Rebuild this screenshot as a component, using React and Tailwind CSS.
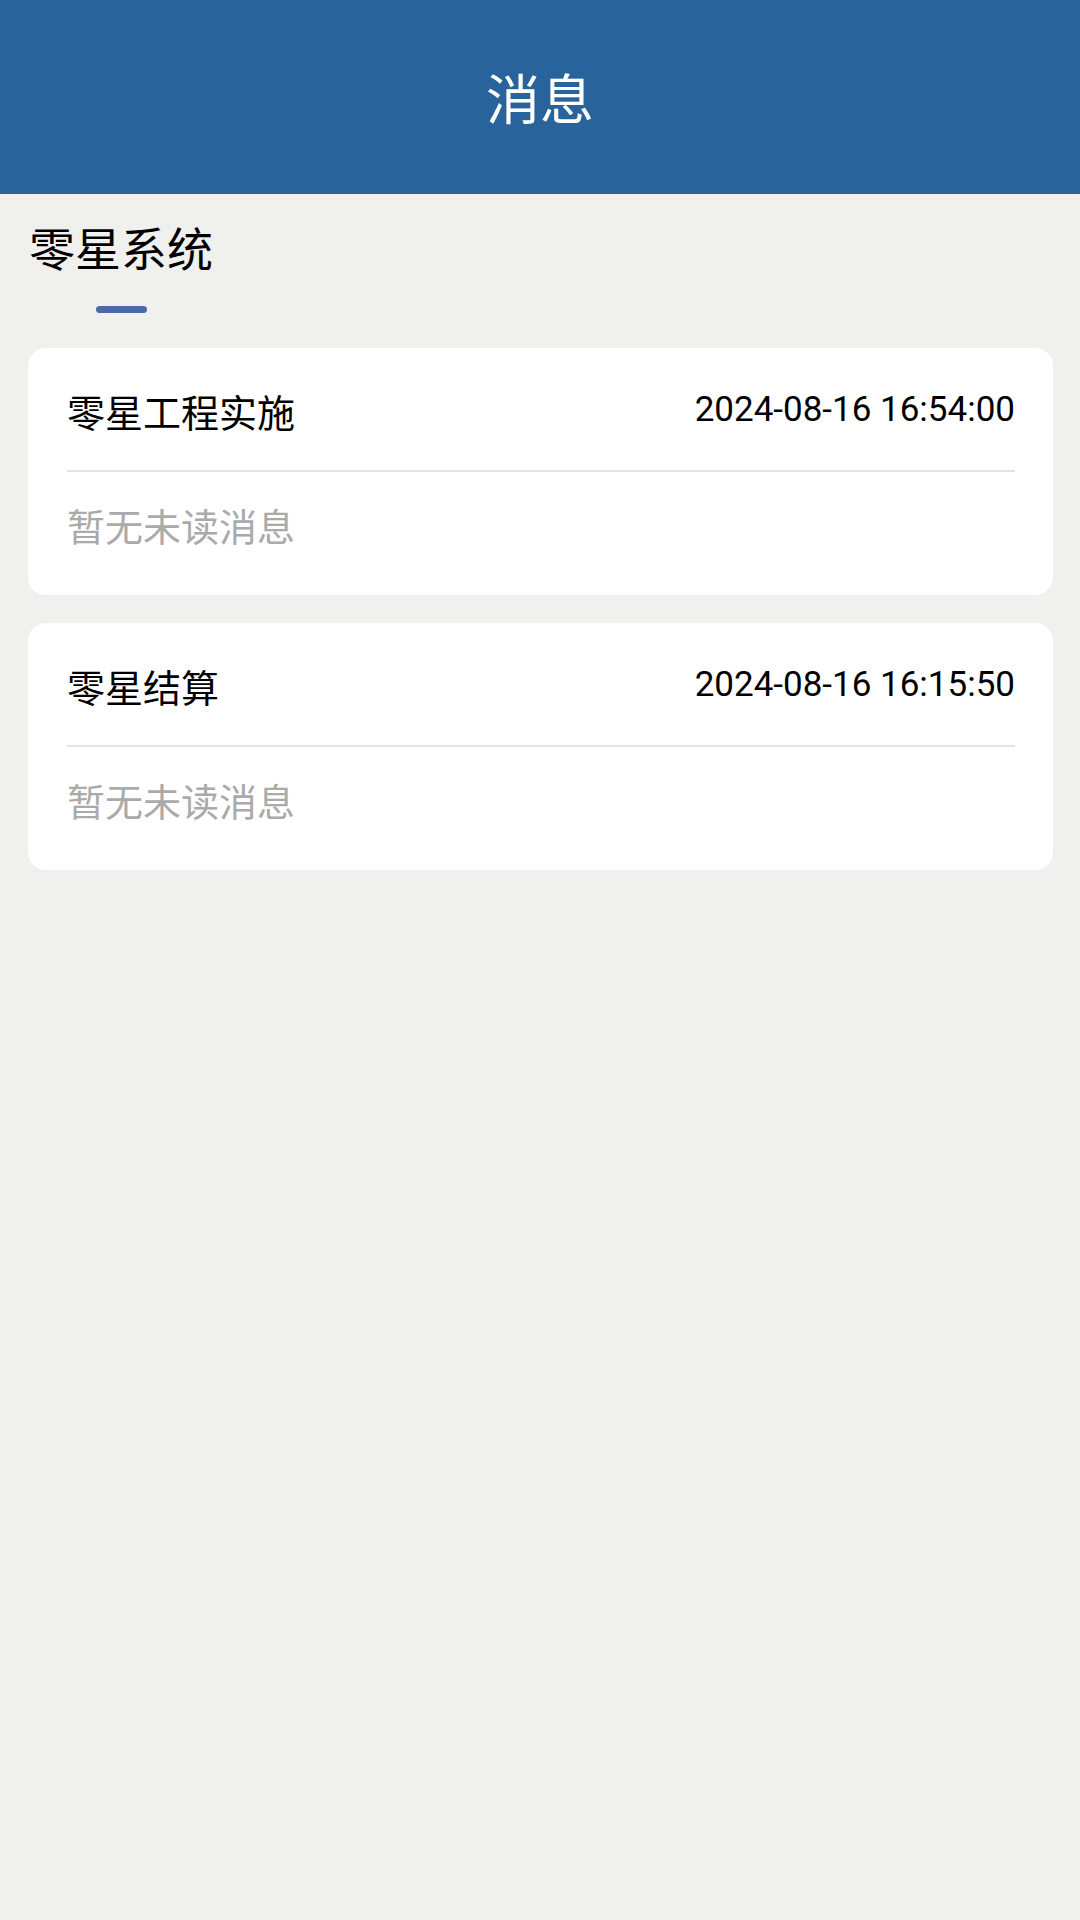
import React from 'react';

const messages = [
  { title: '零星工程实施', time: '2024-08-16 16:54:00', content: '暂无未读消息' },
  { title: '零星结算', time: '2024-08-16 16:15:50', content: '暂无未读消息' },
];

const cjk = "font-['Noto_Sans_CJK_SC',sans-serif]";

const MessageCard = ({ item }) => (
  <div className="bg-white rounded-[18px] pl-[39px] pr-[38px]">
    {/* title row */}
    <div className="h-[122px] pt-[44px] flex items-start justify-between">
      <span className={`${cjk} text-[38px] leading-none text-black`}>{item.title}</span>
      <span className="font-['Roboto',sans-serif] text-[35px] leading-none text-black">{item.time}</span>
    </div>
    <div className="h-[2px] bg-[#e3e3e3]"></div>
    <div className="h-[123px] pt-[34px]">
      <span className={`${cjk} text-[38px] leading-none text-[#aaaaaa]`}>{item.content}</span>
    </div>
  </div>
);

const App = () => {
  return (
    <div className={`min-h-[1920px] w-[1080px] bg-[#f0f0ef] ${cjk}`}>
      {/* Header */}
      <header className="h-[194px] bg-[#28639b] flex items-center justify-center">
        <h1 className="text-[54px] leading-none text-white">消息</h1>
      </header>

      {/* Tabs */}
      <div className="px-[29px] pt-[29px]">
        <div className="inline-flex flex-col items-center">
          <span className="text-[46px] leading-none text-black">零星系统</span>
          <div className="mt-[37px] w-[51px] h-[7px] rounded-full bg-[#4a6ba3]"></div>
        </div>
      </div>

      {/* Cards */}
      <div className="pl-[28px] pr-[27px] pt-[35px] flex flex-col gap-[28px]">
        {messages.map((m) => (
          <MessageCard key={m.title} item={m} />
        ))}
      </div>
    </div>
  );
};

export default App;
